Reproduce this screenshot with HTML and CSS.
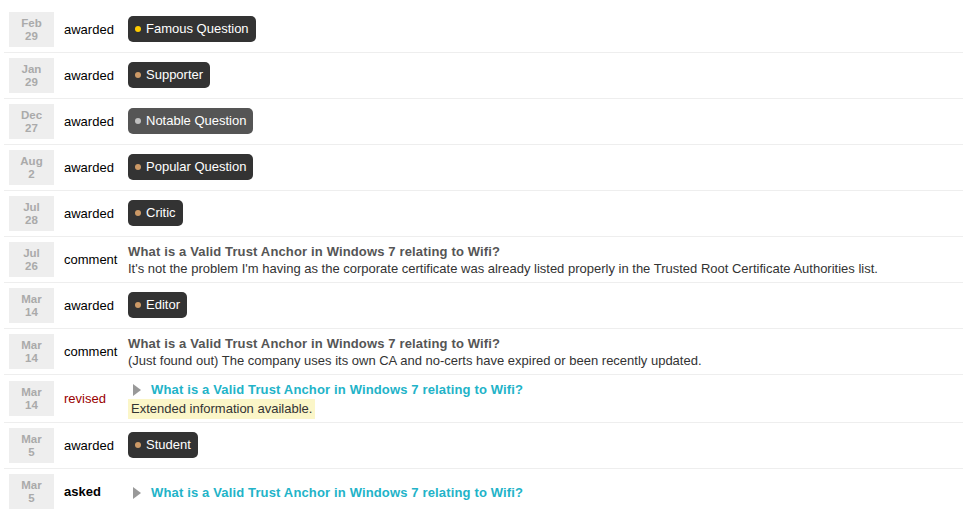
FILE: index.html
```html
<!DOCTYPE html>
<html>
<head>
<meta charset="utf-8">
<link rel="stylesheet" href="styles.css">
</head>
<body>
<div class="timeline">
  <div class="row">
    <div class="date"><span>Feb</span><span>29</span></div>
    <div class="action">awarded</div>
    <div class="content badge-cell"><span class="badge"><span class="dot gold"></span>Famous Question</span></div>
  </div>
  <div class="row">
    <div class="date"><span>Jan</span><span>29</span></div>
    <div class="action">awarded</div>
    <div class="content badge-cell"><span class="badge"><span class="dot bronze"></span>Supporter</span></div>
  </div>
  <div class="row">
    <div class="date"><span>Dec</span><span>27</span></div>
    <div class="action">awarded</div>
    <div class="content badge-cell"><span class="badge badge-hover"><span class="dot silver"></span>Notable Question</span></div>
  </div>
  <div class="row">
    <div class="date"><span>Aug</span><span>2</span></div>
    <div class="action">awarded</div>
    <div class="content badge-cell"><span class="badge"><span class="dot bronze"></span>Popular Question</span></div>
  </div>
  <div class="row">
    <div class="date"><span>Jul</span><span>28</span></div>
    <div class="action">awarded</div>
    <div class="content badge-cell"><span class="badge"><span class="dot bronze"></span>Critic</span></div>
  </div>
  <div class="row">
    <div class="date"><span>Jul</span><span>26</span></div>
    <div class="action">comment</div>
    <div class="content">
      <div class="title">What is a Valid Trust Anchor in Windows 7 relating to Wifi?</div>
      <div class="body">It's not the problem I'm having as the corporate certificate was already listed properly in the Trusted Root Certificate Authorities list.</div>
    </div>
  </div>
  <div class="row">
    <div class="date"><span>Mar</span><span>14</span></div>
    <div class="action">awarded</div>
    <div class="content badge-cell"><span class="badge"><span class="dot bronze"></span>Editor</span></div>
  </div>
  <div class="row">
    <div class="date"><span>Mar</span><span>14</span></div>
    <div class="action">comment</div>
    <div class="content">
      <div class="title">What is a Valid Trust Anchor in Windows 7 relating to Wifi?</div>
      <div class="body">(Just found out) The company uses its own CA and no-certs have expired or been recently updated.</div>
    </div>
  </div>
  <div class="row">
    <div class="date"><span>Mar</span><span>14</span></div>
    <div class="action revised">revised</div>
    <div class="content">
      <div class="linkline"><span class="arrow"></span><a class="qlink" href="#">What is a Valid Trust Anchor in Windows 7 relating to Wifi?</a></div>
      <div><span class="note">Extended information available.</span></div>
    </div>
  </div>
  <div class="row">
    <div class="date"><span>Mar</span><span>5</span></div>
    <div class="action">awarded</div>
    <div class="content badge-cell"><span class="badge"><span class="dot bronze"></span>Student</span></div>
  </div>
  <div class="row">
    <div class="date"><span>Mar</span><span>5</span></div>
    <div class="action asked">asked</div>
    <div class="content">
      <div class="linkline single"><span class="arrow"></span><a class="qlink" href="#">What is a Valid Trust Anchor in Windows 7 relating to Wifi?</a></div>
    </div>
  </div>
</div>
</body>
</html>
```
FILE: styles.css
```css
html, body {
  margin: 0;
  padding: 0;
  background: #fff;
}
body {
  font-family: "Liberation Sans", Arial, sans-serif;
  font-size: 13px;
  color: #000;
}
.timeline {
  margin: 7px 6px 0 4px;
}
.row {
  display: flex;
  align-items: center;
  border-top: 1px solid #eee;
}
.row:first-child {
  border-top: none;
}
.date {
  flex: none;
  width: 45px;
  height: 35px;
  margin: 5px 0 5px 5px;
  background: #eee;
  color: #aaa;
  font-size: 11.5px;
  font-weight: bold;
  line-height: 13px;
  display: flex;
  flex-direction: column;
  align-items: center;
  justify-content: center;
}
.action {
  flex: none;
  width: 64px;
  padding-left: 10px;
  line-height: 17px;
}
.action.revised {
  color: #990000;
}
.action.asked {
  font-weight: bold;
}
.content {
  flex: 1;
  padding: 3px 0;
  line-height: 17px;
}
.badge-cell {
  display: flex;
  align-items: center;
}
.badge {
  display: flex;
  align-items: center;
  background: #333;
  color: #fff;
  border-radius: 5px;
  padding: 5px 7px;
  line-height: 16px;
  margin-bottom: 2px;
}
.badge-hover {
  background: #555;
}
.dot {
  width: 6px;
  height: 6px;
  border-radius: 50%;
  margin-right: 5px;
}
.gold { background: #ffcc00; }
.silver { background: #c0c0c0; }
.bronze { background: #cc9966; }
.title {
  font-weight: bold;
  color: #555;
  letter-spacing: 0.15px;
}
.body {
  color: #333;
}
.linkline {
  display: flex;
  align-items: center;
  line-height: 19px;
  padding-top: 2px;
}
.linkline.single {
  padding-top: 0;
  margin-top: 2px;
}
.arrow {
  width: 0;
  height: 0;
  border-left: 8px solid #999;
  border-top: 6px solid transparent;
  border-bottom: 6px solid transparent;
  margin: 0 10px 0 5px;
}
.qlink {
  color: #22b3c8;
  font-weight: bold;
  text-decoration: none;
  letter-spacing: 0.15px;
}
.note {
  display: inline-block;
  background: #fbf6c8;
  color: #333;
  line-height: 18px;
  padding: 1px 3px;
}
```
